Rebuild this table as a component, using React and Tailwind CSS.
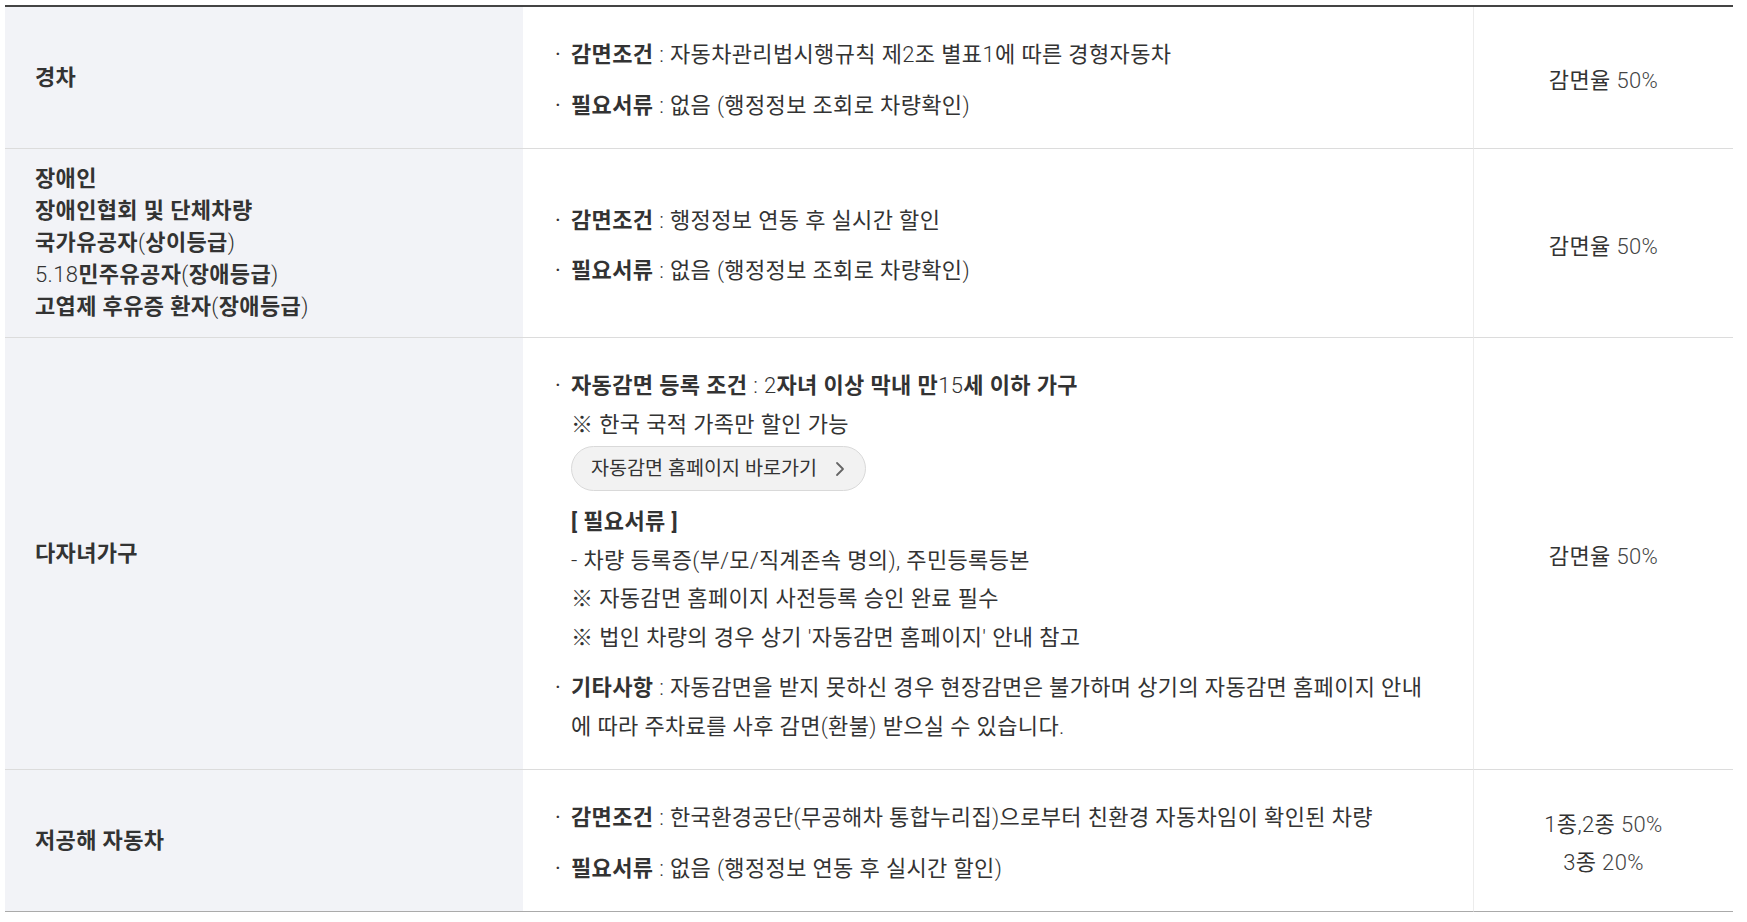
import React from "react";

const LATIN = /([0-9A-Za-z.,:%()'\/\-]+)/;

function M({ children }) {
  const s = String(children);
  return s.split(LATIN).map((p, i) =>
    LATIN.test(p) ? (
      <span key={i} className="font-light">
        {p}
      </span>
    ) : (
      <React.Fragment key={i}>{p}</React.Fragment>
    )
  );
}

function Item({ children }) {
  return (
    <li className="relative">
      <span className="absolute left-[-16px] top-0 font-normal">·</span>
      {children}
    </li>
  );
}

function Chevron() {
  return (
    <svg width="10" height="16" viewBox="0 0 10 16" className="shrink-0">
      <polyline
        points="2,2 8,8 2,14"
        fill="none"
        stroke="#666"
        strokeWidth="1.8"
        strokeLinecap="round"
        strokeLinejoin="round"
      />
    </svg>
  );
}

const c1 = "pl-[30px] pr-[20px] py-[14px] font-bold text-[22px] leading-[32px] align-middle bg-[#f2f3f7] border-b border-[#dcdcdc]";
const c2 = "pl-[48px] pr-[44px] pt-[29px] pb-[23px] text-[22px] leading-[38.5px] align-middle border-b border-[#dcdcdc]";
const c3 = "pt-[7px] text-center text-[22px] leading-[38px] align-middle border-b border-l border-[#dcdcdc] border-l-[#ececec]";

function Rate({ children }) {
  return (
    <span>
      감면율 <span className="font-light text-[#444]">{children}</span>
    </span>
  );
}

export default function App() {
  return (
    <div className="w-[1747px] h-[922px] bg-white pt-[5px] pl-[5px] font-['Roboto','Noto_Sans_CJK_KR',sans-serif] tracking-[0.35px] text-[#333]">
      <table className="table-fixed border-separate border-spacing-0 w-[1728px] border-t-2 border-[#444]">
        <colgroup>
          <col className="w-[518px]" />
          <col className="w-[950px]" />
          <col />
        </colgroup>
        <tbody>
          <tr>
            <td className={c1}>경차</td>
            <td className={c2}>
              <ul className="flex flex-col gap-[12px]">
                <Item>
                  <b className="font-bold">감면조건</b> <M>: 자동차관리법시행규칙 제2조 별표1에 따른 경형자동차</M>
                </Item>
                <Item>
                  <b className="font-bold">필요서류</b> <M>: 없음 (행정정보 조회로 차량확인)</M>
                </Item>
              </ul>
            </td>
            <td className={c3}>
              <Rate>50%</Rate>
            </td>
          </tr>
          <tr>
            <td className={c1}>
              <p>장애인</p>
              <p>장애인협회 및 단체차량</p>
              <p>
                <M>국가유공자(상이등급)</M>
              </p>
              <p>
                <M>5.18민주유공자(장애등급)</M>
              </p>
              <p>
                <M>고엽제 후유증 환자(장애등급)</M>
              </p>
            </td>
            <td className={c2}>
              <ul className="flex flex-col gap-[12px]">
                <Item>
                  <b className="font-bold">감면조건</b> <M>: 행정정보 연동 후 실시간 할인</M>
                </Item>
                <Item>
                  <b className="font-bold">필요서류</b> <M>: 없음 (행정정보 조회로 차량확인)</M>
                </Item>
              </ul>
            </td>
            <td className={c3}>
              <Rate>50%</Rate>
            </td>
          </tr>
          <tr>
            <td className={c1}>다자녀가구</td>
            <td className={c2}>
              <ul className="flex flex-col gap-[12px]">
                <Item>
                  <p>
                    <b className="font-bold">자동감면 등록 조건</b> <M>:</M>{" "}
                    <b className="font-bold">
                      <M>2자녀 이상 막내 만15세 이하 가구</M>
                    </b>
                  </p>
                  <p>※ 한국 국적 가족만 할인 가능</p>
                  <a className="mt-[2px] mb-[12px] flex w-fit h-[45px] items-center gap-[18px] rounded-full border border-[#d9d9d9] bg-[#f2f2f2] pl-[19px] pr-[20px] text-[19.6px] tracking-normal leading-none text-[#333]">
                    <span>자동감면 홈페이지 바로가기</span>
                    <Chevron />
                  </a>
                  <p className="font-bold">[ 필요서류 ]</p>
                  <p>
                    <M>- 차량 등록증(부/모/직계존속 명의), 주민등록등본</M>
                  </p>
                  <p>※ 자동감면 홈페이지 사전등록 승인 완료 필수</p>
                  <p>
                    <M>※ 법인 차량의 경우 상기 '자동감면 홈페이지' 안내 참고</M>
                  </p>
                </Item>
                <Item>
                  <b className="font-bold">기타사항</b>{" "}
                  <M>: 자동감면을 받지 못하신 경우 현장감면은 불가하며 상기의 자동감면 홈페이지 안내에 따라 주차료를 사후 감면(환불) 받으실 수 있습니다.</M>
                </Item>
              </ul>
            </td>
            <td className={c3}>
              <Rate>50%</Rate>
            </td>
          </tr>
          <tr>
            <td className={`${c1} border-b-[#aaa]`}>저공해 자동차</td>
            <td className={`${c2} border-b-[#aaa]`}>
              <ul className="flex flex-col gap-[12px]">
                <Item>
                  <b className="font-bold">감면조건</b>{" "}
                  <M>: 한국환경공단(무공해차 통합누리집)으로부터 친환경 자동차임이 확인된 차량</M>
                </Item>
                <Item>
                  <b className="font-bold">필요서류</b> <M>: 없음 (행정정보 연동 후 실시간 할인)</M>
                </Item>
              </ul>
            </td>
            <td className={`${c3} border-b-[#aaa]`}>
              <p>
                <span className="font-light">1</span>종<span className="font-light">,2</span>종{" "}
                <span className="font-light text-[#444]">50%</span>
              </p>
              <p>
                <span className="font-light">3</span>종 <span className="font-light text-[#444]">20%</span>
              </p>
            </td>
          </tr>
        </tbody>
      </table>
    </div>
  );
}
